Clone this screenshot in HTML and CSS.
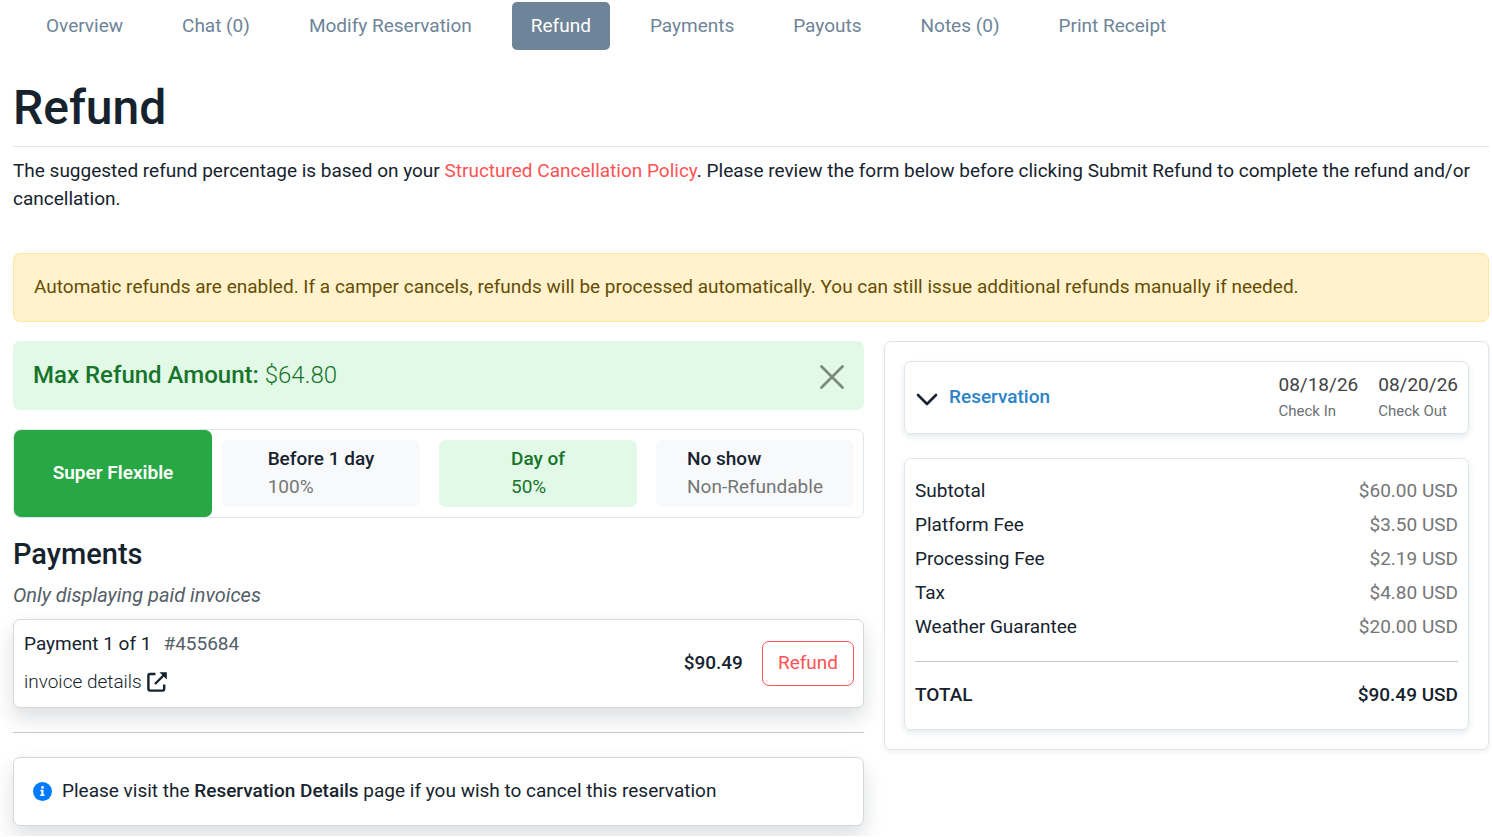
FILE: index.html
```html
<!DOCTYPE html>
<html lang="en">
<head>
<meta charset="utf-8">
<title>Refund</title>
<link rel="stylesheet" href="styles.css">
</head>
<body>
<div class="page">
  <nav class="tabs" aria-label="Reservation sections">
    <a class="tab" href="#overview">Overview</a>
    <a class="tab" href="#chat">Chat (0)</a>
    <a class="tab" href="#modify">Modify Reservation</a>
    <a class="tab tab-active" href="#refund" aria-current="page">Refund</a>
    <a class="tab" href="#payments">Payments</a>
    <a class="tab" href="#payouts">Payouts</a>
    <a class="tab" href="#notes">Notes (0)</a>
    <a class="tab" href="#print">Print Receipt</a>
  </nav>
  <main>
    <h1 class="title">Refund</h1>
    <p class="intro">The suggested refund percentage is based on your <a class="policy-link" href="#policy">Structured Cancellation Policy</a>. Please review the form below before clicking Submit Refund to complete the refund and/or cancellation.</p>
    <div class="notice">Automatic refunds are enabled. If a camper cancels, refunds will be processed automatically. You can still issue additional refunds manually if needed.</div>
    <div class="columns">
      <div class="left">
        <div class="max-refund">
          <p class="max-text"><strong class="max-label">Max Refund Amount:</strong> $64.80</p>
          <button class="close" type="button" aria-label="Close">
            <svg width="26" height="26" viewBox="0 0 26 26" fill="none" stroke="currentColor" stroke-width="2.800" stroke-linecap="round"><path d="M2.500 2.500l21 21M23.500 2.500l-21 21"/></svg>
          </button>
        </div>
        <div class="policy">
          <div class="policy-name">Super Flexible</div>
          <div class="tier"><div><div class="tier-when">Before 1 day</div><div class="tier-value">100%</div></div></div>
          <div class="tier tier-current"><div><div class="tier-when">Day of</div><div class="tier-value">50%</div></div></div>
          <div class="tier"><div><div class="tier-when">No show</div><div class="tier-value">Non-Refundable</div></div></div>
        </div>
        <h2 class="subtitle">Payments</h2>
        <p class="hint">Only displaying paid invoices</p>
        <div class="card payment">
          <div class="payment-info">
            <div class="payment-line"><span>Payment 1 of 1</span><span class="payment-id">#455684</span></div>
            <a class="invoice" href="#invoice">invoice details
              <svg width="20" height="20" viewBox="0 0 20 20" fill="none" stroke="currentColor" stroke-width="2.400"><path d="M8.500 2H3.200Q1.400 2 1.400 3.800V16.800Q1.400 18.600 3.200 18.600H15.400Q17.200 18.600 17.200 16.800V12.500M8 12L17 3"/><path d="M12.500 .2h7.300V7.500z" fill="currentColor" stroke="none"/></svg>
            </a>
          </div>
          <span class="payment-amount">$90.49</span>
          <button class="refund-button" type="button">Refund</button>
        </div>
        <hr class="rule">
        <div class="card info">
          <svg width="19" height="19" viewBox="0 0 19 19"><circle cx="9.500" cy="9.500" r="9.500" fill="#007bff"/><circle cx="9.500" cy="5.500" r="1.400" fill="#fff"/><path d="M7.300 7.800h3.200v4.800h1.100v1.500H7.200v-1.500h1.100V9.300h-1z" fill="#fff"/></svg>
          <span>Please visit the <strong class="strong">Reservation Details</strong> page if you wish to cancel this reservation</span>
        </div>
      </div>
      <aside class="summary">
        <div class="box reservation">
          <button class="toggle" type="button">
            <svg width="22" height="18" viewBox="0 0 22 18" fill="none" stroke="#16232e" stroke-width="2.600" stroke-linecap="round" stroke-linejoin="round"><path d="M2 7l9 9 9-9"/></svg>
            <span>Reservation</span>
          </button>
          <div class="date"><div>08/18/26</div><div class="date-label">Check In</div></div>
          <div class="date"><div>08/20/26</div><div class="date-label">Check Out</div></div>
        </div>
        <div class="box costs">
          <table class="cost-table">
            <tbody>
              <tr><th scope="row">Subtotal</th><td>$60.00 USD</td></tr>
              <tr><th scope="row">Platform Fee</th><td>$3.50 USD</td></tr>
              <tr><th scope="row">Processing Fee</th><td>$2.19 USD</td></tr>
              <tr><th scope="row">Tax</th><td>$4.80 USD</td></tr>
              <tr><th scope="row">Weather Guarantee</th><td>$20.00 USD</td></tr>
            </tbody>
          </table>
          <div class="total"><span>TOTAL</span><span>$90.49 USD</span></div>
        </div>
      </aside>
    </div>
  </main>
</div>
</body>
</html>
```
FILE: styles.css
```css
* { box-sizing: border-box; }
body {
  margin: 0;
  background: #fff;
  color: #16232e;
  font-family: Roboto, "Liberation Sans", sans-serif;
  font-size: 19px;
  line-height: 28px;
}
h1, h2, p { margin: 0; }
button { font: inherit; cursor: pointer; }
a { text-decoration: none; }
svg { flex: none; }
.page { padding: 2px 3px 10px 13px; }
.tabs { display: flex; gap: 21px; padding-left: 14px; }
.tab { padding: 10px 19px; border-radius: 5px; color: #6e8498; }
.tab-active { background: #6e8498; color: #fff; }
.title {
  margin-top: 29px;
  padding-bottom: 9px;
  border-bottom: 1px solid #dee6ed;
  font-size: 48px;
  line-height: 58px;
  font-weight: 500;
}
.intro { margin-top: 10px; }
.policy-link { color: #ff5254; }
.notice {
  margin-top: 40px;
  padding: 19px 20px 20px;
  border: 1px solid #ffe69c;
  border-radius: 7px;
  background: #fff2cd;
  color: #664d03;
}
.columns {
  display: grid;
  grid-template-columns: 851fr 605fr;
  gap: 20px;
  align-items: start;
  margin-top: 19px;
}
.max-refund {
  display: flex;
  align-items: center;
  justify-content: space-between;
  padding: 19px 19px 20px 20px;
  border-radius: 7px;
  background: #e2f9e7;
  color: #17742b;
}
.max-text { font-size: 24px; font-weight: 300; }
.max-label { font-weight: 500; }
.close { display: flex; padding: 4px 0 0; border: 0; background: none; color: #7a8a7f; }
.policy {
  display: flex;
  margin-top: 19px;
  border: 1px solid #dee6ed;
  border-radius: 7px;
}
.policy-name {
  display: flex;
  flex: 1;
  align-items: center;
  justify-content: center;
  padding-bottom: 2px;
  border-radius: 7px;
  background: #28a745;
  color: #fff;
  font-weight: 600;
}
.tier {
  display: flex;
  flex: 1;
  justify-content: center;
  margin: 10px 9px 10px 10px;
  padding: 5px 0 6px;
  border-radius: 7px;
  background: #f8f9fb;
}
.tier-when, .strong { font-weight: 500; }
.tier-value { color: #747677; }
.tier-current { background: #e2f9e7; }
.tier-current, .tier-current .tier-value { color: #17742b; }
.subtitle { margin-top: 19px; font-size: 29px; line-height: 34px; font-weight: 500; }
.hint { margin-top: 10px; font-size: 20px; font-style: italic; color: #535e66; }
.card {
  display: flex;
  align-items: center;
  border: 1px solid #d4d8db;
  border-radius: 7px;
  background: #fff;
  box-shadow: 0 10px 20px rgba(22, 35, 46, .15);
}
.payment { margin-top: 10px; padding: 10px 9px 11px 10px; }
.payment-info { display: flex; flex-direction: column; gap: 10px; flex: 1; }
.payment-line { display: flex; gap: 12px; }
.payment-id { color: #535e66; }
.invoice { display: flex; align-items: center; gap: 5px; color: #16232e; font-weight: 300; }
.payment-amount { font-weight: 500; }
.refund-button {
  margin-left: 19px;
  padding: 7px 15px 8px;
  border: 1px solid #ff5254;
  border-radius: 7px;
  background: none;
  color: #ff5254;
}
.rule { margin: 24px 0; border: 0; border-top: 1px solid #c3c8ca; }
.info { gap: 10px; padding: 19px 19px 20px; }
.summary {
  display: grid;
  gap: 24px;
  padding: 19px;
  border: 1px solid #dee6ed;
  border-radius: 7px;
  box-shadow: 0 2px 5px rgba(22, 35, 46, .08);
}
.box {
  padding: 9px 10px;
  border: 1px solid #dee6ed;
  border-radius: 7px;
  box-shadow: 0 3px 6px rgba(22, 35, 46, .1);
}
.reservation { display: flex; align-items: center; gap: 20px; }
.toggle {
  display: flex;
  align-items: center;
  gap: 11px;
  margin-right: auto;
  padding: 0 1px 2px;
  border: 0;
  background: none;
  color: #2b83c6;
  font-weight: 500;
}
.date { color: #3f4447; }
.date-label { color: #6d7173; font-size: 15px; line-height: 25px; }
.costs { padding: 15px 10px 20px; }
.cost-table { width: 100%; border-collapse: collapse; line-height: 34px; }
.cost-table th, .cost-table td { padding: 0; font-weight: 400; text-align: left; }
.cost-table td { color: #747677; text-align: right; }
.total {
  display: flex;
  justify-content: space-between;
  margin-top: 17px;
  padding-top: 19px;
  border-top: 1px solid #c3c8ca;
  font-weight: 500;
}
```
